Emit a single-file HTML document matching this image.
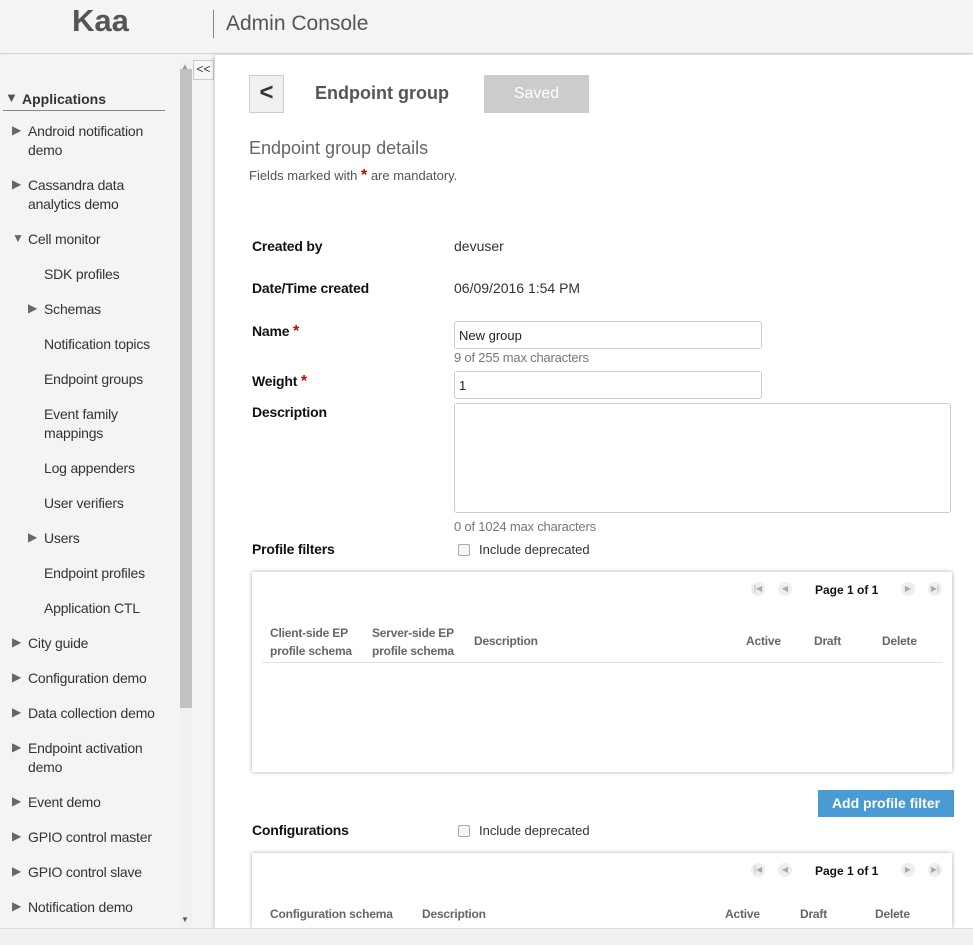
<!DOCTYPE html>
<html style="overflow:hidden;height:945px"><head><meta charset="utf-8"><style>
*{box-sizing:border-box;margin:0;padding:0}
body{width:973px;height:945px;overflow:hidden;background:#fff;font-family:"Liberation Sans",sans-serif;font-size:14px;color:#333;position:relative}
.a{position:absolute;white-space:nowrap}
#hdr{position:absolute;left:0;top:0;width:973px;height:54px;background:#f4f4f4;border-bottom:1px solid #d6d6d6;box-shadow:0 1px 2px rgba(0,0,0,.1)}
#side{position:absolute;left:0;top:55px;width:215px;height:873px;background:#f4f4f4}
#main{position:absolute;left:215px;top:55px;width:758px;height:873px;background:#fff;box-shadow:-2px 0 3px rgba(0,0,0,.12)}
.tri{font-size:12px;color:#666;position:absolute}
.si{position:absolute;color:#333;font-size:14px;line-height:19px;letter-spacing:-.2px}
.lbl{font-weight:bold;color:#111;font-size:14px;letter-spacing:-.2px}
.star{color:#c00;font-size:16px}
.inp{position:absolute;border:1px solid #ccc;border-radius:3px;background:#fff}
.hint{color:#777;font-size:13px;letter-spacing:-.2px}
.panel{position:absolute;background:#fff;box-shadow:0 0 4px rgba(0,0,0,.35)}
.th{position:absolute;font-weight:bold;color:#666;font-size:12px;line-height:18px;letter-spacing:-.2px}
.pg{position:absolute;width:14px;height:14px;border-radius:7px;background:#eee;color:#aaa;font-size:8px;text-align:center;line-height:14px}
.cb{position:absolute;width:12px;height:12px;border:1px solid #aaa;border-radius:2px;background:#f6f6f6}
</style></head><body>
<div id="hdr">
<div class="a" style="left:72px;top:3px;font-size:31px;font-weight:bold;color:#555">Kaa</div>
<div class="a" style="left:213px;top:10px;width:1px;height:28px;background:#888"></div>
<div class="a" style="left:226px;top:12px;font-size:21px;color:#555">Admin Console</div>
</div>
<div id="side">
<div class="a" style="left:180px;top:7px;width:12px;height:866px;background:#f1f1f1"></div>
<div class="a" style="left:181px;top:7px;font-size:8px;color:#999">▲</div>
<div class="a" style="left:180px;top:14px;width:12px;height:639px;background:#c1c1c1"></div>
<div class="a" style="left:181px;top:860px;font-size:8px;color:#555">▼</div>
<div class="a" style="left:193px;top:5px;width:21px;height:20px;border:1px solid #ccc;background:#f7f7f7;font-size:12px;color:#333;text-align:center;line-height:17px">&lt;&lt;</div>
<div class="a" style="left:5px;top:35px;font-size:13px;color:#555">▼</div>
<div class="a" style="left:22px;top:36px;font-weight:bold;font-size:14px;color:#333">Applications</div>
<div class="a" style="left:3px;top:55px;width:162px;height:1px;background:#888"></div>
</div>
<div class="tri" style="left:12px;top:123px">▶</div><div class="si" style="left:28px;top:122px">Android notification<br>demo</div>
<div class="tri" style="left:12px;top:177px">▶</div><div class="si" style="left:28px;top:176px">Cassandra data<br>analytics demo</div>
<div class="tri" style="left:12px;top:231px">▼</div><div class="si" style="left:28px;top:230px">Cell monitor</div>
<div class="si" style="left:44px;top:265px">SDK profiles</div>
<div class="tri" style="left:28px;top:301px">▶</div><div class="si" style="left:44px;top:300px">Schemas</div>
<div class="si" style="left:44px;top:335px">Notification topics</div>
<div class="si" style="left:44px;top:370px">Endpoint groups</div>
<div class="si" style="left:44px;top:405px">Event family<br>mappings</div>
<div class="si" style="left:44px;top:459px">Log appenders</div>
<div class="si" style="left:44px;top:494px">User verifiers</div>
<div class="tri" style="left:28px;top:530px">▶</div><div class="si" style="left:44px;top:529px">Users</div>
<div class="si" style="left:44px;top:564px">Endpoint profiles</div>
<div class="si" style="left:44px;top:599px">Application CTL</div>
<div class="tri" style="left:12px;top:635px">▶</div><div class="si" style="left:28px;top:634px">City guide</div>
<div class="tri" style="left:12px;top:670px">▶</div><div class="si" style="left:28px;top:669px">Configuration demo</div>
<div class="tri" style="left:12px;top:705px">▶</div><div class="si" style="left:28px;top:704px">Data collection demo</div>
<div class="tri" style="left:12px;top:740px">▶</div><div class="si" style="left:28px;top:739px">Endpoint activation<br>demo</div>
<div class="tri" style="left:12px;top:794px">▶</div><div class="si" style="left:28px;top:793px">Event demo</div>
<div class="tri" style="left:12px;top:829px">▶</div><div class="si" style="left:28px;top:828px">GPIO control master</div>
<div class="tri" style="left:12px;top:864px">▶</div><div class="si" style="left:28px;top:863px">GPIO control slave</div>
<div class="tri" style="left:12px;top:899px">▶</div><div class="si" style="left:28px;top:898px">Notification demo</div>
<div id="main"></div>
<div class="a" style="left:249px;top:75px;width:35px;height:38px;border:1px solid #ccc;background:#f0f0f0;font-size:24px;font-weight:bold;color:#333;text-align:center;line-height:34px">&lt;</div>
<div class="a" style="left:315px;top:83px;font-size:18px;font-weight:bold;color:#555">Endpoint group</div>
<div class="a" style="left:484px;top:75px;width:105px;height:38px;background:#ccc;color:#fff;font-size:16px;text-align:center;line-height:38px">Saved</div>
<div class="a" style="left:249px;top:138px;font-size:18px;color:#666">Endpoint group details</div>
<div class="a" style="left:249px;top:167px;font-size:13px;color:#555">Fields marked with <span class="star" style="font-weight:bold">*</span> are mandatory.</div>
<div class="a lbl" style="left:252px;top:238px">Created by</div>
<div class="a" style="left:454px;top:238px;color:#333">devuser</div>
<div class="a lbl" style="left:252px;top:280px">Date/Time created</div>
<div class="a" style="left:454px;top:280px;color:#333">06/09/2016 1:54 PM</div>
<div class="a lbl" style="left:252px;top:323px">Name <span class="star">*</span></div>
<div class="inp" style="left:454px;top:321px;width:308px;height:28px"></div>
<div class="a" style="left:459px;top:328px;font-size:13px;color:#222">New group</div>
<div class="a hint" style="left:454px;top:350px">9 of 255 max characters</div>
<div class="a lbl" style="left:252px;top:373px">Weight <span class="star">*</span></div>
<div class="inp" style="left:454px;top:371px;width:308px;height:28px"></div>
<div class="a" style="left:459px;top:378px;font-size:13px;color:#222">1</div>
<div class="a lbl" style="left:252px;top:404px">Description</div>
<div class="inp" style="left:454px;top:403px;width:497px;height:110px"></div>
<div class="a hint" style="left:454px;top:519px">0 of 1024 max characters</div>
<div class="a lbl" style="left:252px;top:541px">Profile filters</div>
<div class="cb" style="left:458px;top:544px"></div>
<div class="a" style="left:479px;top:542px;font-size:13px;color:#333">Include deprecated</div>
<div class="panel" style="left:252px;top:572px;width:700px;height:200px"></div>
<div class="pg" style="left:751px;top:582px">|◀</div><div class="pg" style="left:778px;top:582px">◀</div>
<div class="a" style="left:815px;top:583px;font-size:12px;font-weight:bold;color:#111">Page 1 of 1</div>
<div class="pg" style="left:901px;top:582px">▶</div><div class="pg" style="left:928px;top:582px">▶|</div>
<div class="th" style="left:270px;top:624px">Client-side EP<br>profile schema</div>
<div class="th" style="left:372px;top:624px">Server-side EP<br>profile schema</div>
<div class="th" style="left:474px;top:632px">Description</div>
<div class="th" style="left:746px;top:632px">Active</div>
<div class="th" style="left:814px;top:632px">Draft</div>
<div class="th" style="left:882px;top:632px">Delete</div>
<div class="a" style="left:262px;top:662px;width:681px;height:1px;background:#e2e2e2"></div>
<div class="a" style="left:818px;top:790px;width:136px;height:27px;background:#4a9ad4;color:#fff;font-weight:bold;font-size:14px;text-align:center;line-height:27px">Add profile filter</div>
<div class="a lbl" style="left:252px;top:822px">Configurations</div>
<div class="cb" style="left:458px;top:825px"></div>
<div class="a" style="left:479px;top:823px;font-size:13px;color:#333">Include deprecated</div>
<div class="panel" style="left:252px;top:853px;width:700px;height:75px"></div>
<div class="pg" style="left:751px;top:863px">|◀</div><div class="pg" style="left:778px;top:863px">◀</div>
<div class="a" style="left:815px;top:864px;font-size:12px;font-weight:bold;color:#111">Page 1 of 1</div>
<div class="pg" style="left:901px;top:863px">▶</div><div class="pg" style="left:928px;top:863px">▶|</div>
<div class="th" style="left:270px;top:905px">Configuration schema</div>
<div class="th" style="left:422px;top:905px">Description</div>
<div class="th" style="left:725px;top:905px">Active</div>
<div class="th" style="left:800px;top:905px">Draft</div>
<div class="th" style="left:875px;top:905px">Delete</div>
<div class="a" style="left:0;top:928px;width:973px;height:17px;background:#f0f0f0;border-top:1px solid #ddd;z-index:5"></div>
</body></html>
